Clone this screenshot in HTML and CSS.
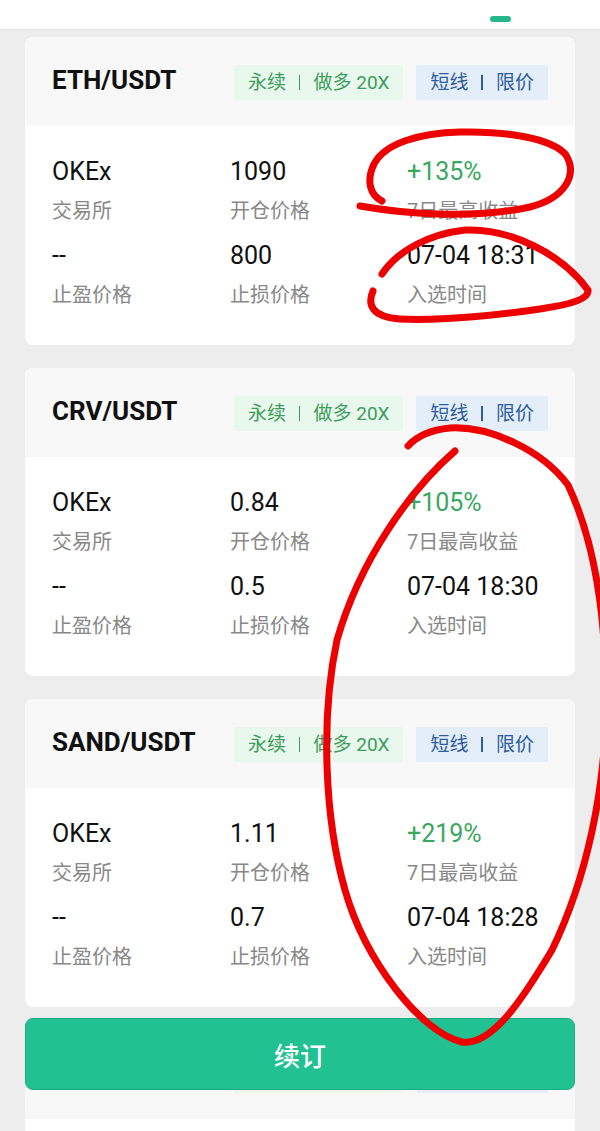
FILE: index.html
```html
<!DOCTYPE html>
<html lang="zh-CN">
<head>
  <meta charset="UTF-8" />
  <meta name="viewport" content="width=device-width, initial-scale=1.0"/>
  <title>策略订阅</title>
  <link rel="stylesheet" href="styles.css">
</head>
<body>
  <div class="topbar">
    <div class="tabs">
      <span class="tab active">精选策略</span>
      <span class="tab">我的订阅</span>
    </div>
    <div class="indicator"></div>
  </div>

  <div class="list">
    <div class="card">
      <div class="card-head">
        <span class="pair">ETH/USDT</span>
        <div class="tags">
          <span class="tag tag-green">永续<i class="sep"></i>做多 20X</span>
          <span class="tag tag-blue">短线<i class="sep"></i>限价</span>
        </div>
      </div>
      <div class="card-body">
        <div class="cell"><div class="val">OKEx</div><div class="lbl">交易所</div></div>
        <div class="cell"><div class="val">1090</div><div class="lbl">开仓价格</div></div>
        <div class="cell"><div class="val up">+135%</div><div class="lbl">7日最高收益</div></div>
        <div class="cell"><div class="val">--</div><div class="lbl">止盈价格</div></div>
        <div class="cell"><div class="val">800</div><div class="lbl">止损价格</div></div>
        <div class="cell"><div class="val">07-04 18:31</div><div class="lbl">入选时间</div></div>
      </div>
    </div>

    <div class="card">
      <div class="card-head">
        <span class="pair">CRV/USDT</span>
        <div class="tags">
          <span class="tag tag-green">永续<i class="sep"></i>做多 20X</span>
          <span class="tag tag-blue">短线<i class="sep"></i>限价</span>
        </div>
      </div>
      <div class="card-body">
        <div class="cell"><div class="val">OKEx</div><div class="lbl">交易所</div></div>
        <div class="cell"><div class="val">0.84</div><div class="lbl">开仓价格</div></div>
        <div class="cell"><div class="val up">+105%</div><div class="lbl">7日最高收益</div></div>
        <div class="cell"><div class="val">--</div><div class="lbl">止盈价格</div></div>
        <div class="cell"><div class="val">0.5</div><div class="lbl">止损价格</div></div>
        <div class="cell"><div class="val">07-04 18:30</div><div class="lbl">入选时间</div></div>
      </div>
    </div>

    <div class="card">
      <div class="card-head">
        <span class="pair">SAND/USDT</span>
        <div class="tags">
          <span class="tag tag-green">永续<i class="sep"></i>做多 20X</span>
          <span class="tag tag-blue">短线<i class="sep"></i>限价</span>
        </div>
      </div>
      <div class="card-body">
        <div class="cell"><div class="val">OKEx</div><div class="lbl">交易所</div></div>
        <div class="cell"><div class="val">1.11</div><div class="lbl">开仓价格</div></div>
        <div class="cell"><div class="val up">+219%</div><div class="lbl">7日最高收益</div></div>
        <div class="cell"><div class="val">--</div><div class="lbl">止盈价格</div></div>
        <div class="cell"><div class="val">0.7</div><div class="lbl">止损价格</div></div>
        <div class="cell"><div class="val">07-04 18:28</div><div class="lbl">入选时间</div></div>
      </div>
    </div>

    <!-- next card sits under the fixed button -->
    <div class="card">
      <div class="card-head">
        <span class="pair"></span>
        <div class="tags">
          <span class="tag tag-green tag-blank"></span>
          <span class="tag tag-blue tag-blank"></span>
        </div>
      </div>
      <div class="card-body card-body-empty"></div>
    </div>
  </div>

  <button class="renew">续订</button>

  <!-- hand-drawn marks on the screenshot -->
  <svg class="marks" width="600" height="1131" viewBox="0 0 600 1131">
    <path d="M360 206 C400 213, 470 220, 530 207 C565 198, 578 175, 566 155 C552 138, 505 131, 460 132 C420 133, 385 143, 374 164 C366 181, 370 195, 382 201"/>
    <path d="M382 274 C398 250, 430 234, 465 230 C510 228, 562 254, 588 290 C589 298, 575 304, 540 309 C500 315, 440 321, 400 319 C372 317, 367 305, 373 291"/>
    <path d="M455 451 C410 490, 360 560, 337 640 C320 720, 325 820, 345 890 C365 960, 420 1032, 462 1042 C492 1046, 522 1000, 552 950 C586 880, 606 790, 606 700 C606 610, 594 540, 568 485 C542 450, 490 426, 450 428 C430 430, 416 437, 408 446"/>
  </svg>
</body>
</html>
```

FILE: styles.css
```css
body {
  margin: 0;
  background-color: #ededed;
  font-family: Roboto, "Noto Sans CJK SC", sans-serif;
  color: #111;
}

.topbar {
  height: 29px;
  background-color: #ffffff;
  border-bottom: 1px solid #e0e0e0;
  overflow: hidden;
}

.tabs {
  display: flex;
  gap: 115px;
  margin-top: -23px;
  padding-left: 64px;
  height: 24px;
  font-size: 22px;
  line-height: 24px;
  color: #666;
}

.tab.active {
  color: #222;
}

.indicator {
  width: 21px;
  height: 6px;
  margin: 15px 0 0 490px;
  border-radius: 3px;
  background-color: #25b98a;
}

.list {
  display: flex;
  flex-direction: column;
  gap: 23px;
  padding: 7px 25px 0;
}

.card {
  background-color: #ffffff;
  border-radius: 8px;
  overflow: hidden;
}

.card-head {
  height: 89px;
  padding: 0 27px;
  background-color: #f8f8f8;
  display: flex;
  align-items: center;
  justify-content: space-between;
}

.pair {
  font-size: 26px;
  font-weight: 700;
  margin-top: -3px;
}

.tags {
  display: flex;
  gap: 13px;
  margin-top: 2px;
}

.tag {
  height: 35px;
  line-height: 35px;
  padding: 0 14px;
  font-size: 19px;
  border-radius: 2px;
}

.tag-green {
  background-color: #e9f8ed;
  color: #3d9c5c;
}

.tag-blue {
  background-color: #e3eef9;
  color: #2e5c9c;
}

.tag-blank.tag-green {
  width: 143px;
}

.tag-blank.tag-blue {
  width: 103px;
}

.sep {
  display: inline-block;
  width: 1.5px;
  height: 15px;
  margin: 0 13px;
  background-color: currentColor;
  vertical-align: -1px;
}

.card-body {
  display: grid;
  grid-template-columns: 178px 177px 1fr;
  row-gap: 13px;
  padding: 30px 27px 34px;
}

.card-body-empty {
  height: 200px;
}

.val {
  font-size: 25px;
  line-height: 32px;
}

.val.up {
  color: #3aa760;
}

.lbl {
  margin-top: 7px;
  font-size: 20px;
  line-height: 32px;
  color: #888;
}

.renew {
  position: fixed;
  left: 25px;
  right: 25px;
  bottom: 41px;
  height: 72px;
  border: 1px solid #1fab80;
  border-radius: 8px;
  background-color: #22c192;
  color: #ffffff;
  font-family: Roboto, "Noto Sans CJK SC", sans-serif;
  font-size: 26px;
  font-weight: 500;
}

.marks {
  position: absolute;
  top: 0;
  left: 0;
  z-index: 10;
  pointer-events: none;
  fill: none;
  stroke: #ec0000;
  stroke-width: 7;
  stroke-linecap: round;
  stroke-linejoin: round;
}
```
